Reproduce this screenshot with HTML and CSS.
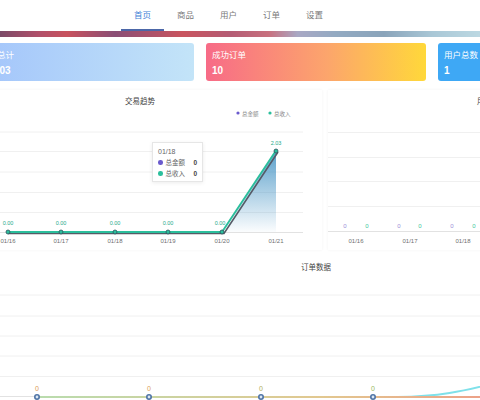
FILE: index.html
```html
<!DOCTYPE html>
<html lang="zh-CN">
<head>
    <meta charset="UTF-8">
    <meta name="viewport" content="width=device-width, initial-scale=1.0">
    <title>后台首页</title>
    <link rel="stylesheet" href="styles.css">
</head>
<body>

    <header class="topbar">
        <nav class="tabs">
            <a class="tab active" href="#">首页</a>
            <a class="tab" href="#">商品</a>
            <a class="tab" href="#">用户</a>
            <a class="tab" href="#">订单</a>
            <a class="tab" href="#">设置</a>
        </nav>
        <div class="ribbon"></div>
    </header>

    <main class="board">

        <!-- Summary cards -->
        <section class="stats">
            <div class="stat stat-blue">
                <div class="stat-label">交易总计</div>
                <div class="stat-value">102.03</div>
            </div>
            <div class="stat stat-warm">
                <div class="stat-label">成功订单</div>
                <div class="stat-value">10</div>
            </div>
            <div class="stat stat-sky">
                <div class="stat-label">用户总数</div>
                <div class="stat-value">1</div>
            </div>
        </section>

        <!-- Trend charts -->
        <section class="charts">
            <div class="panel">
                <svg class="chart" width="370" height="160" viewBox="0 0 370 160">
                    <defs>
                        <linearGradient id="trendFill" x1="0" y1="0" x2="0" y2="1">
                            <stop offset="0" stop-color="#3d8fc2" stop-opacity="0.85"/>
                            <stop offset="1" stop-color="#3d8fc2" stop-opacity="0.02"/>
                        </linearGradient>
                    </defs>
                    <text class="chart-title" x="188" y="14" text-anchor="middle">交易趋势</text>
                    <circle cx="286" cy="23" r="1.6" fill="#6a5acd"/>
                    <text class="legend" x="290" y="25.5">总金额</text>
                    <circle cx="318" cy="23" r="1.6" fill="#2bbf9c"/>
                    <text class="legend" x="322" y="25.5">总收入</text>

                    <g class="grid">
                        <line x1="0" y1="42" x2="351" y2="42"/>
                        <line x1="0" y1="61.5" x2="351" y2="61.5"/>
                        <line x1="0" y1="82" x2="351" y2="82"/>
                        <line x1="0" y1="102.5" x2="351" y2="102.5"/>
                        <line x1="0" y1="122.5" x2="351" y2="122.5"/>
                        <line class="axis" x1="0" y1="142.5" x2="351" y2="142.5"/>
                    </g>

                    <polygon points="270,142 324,61 324,142" fill="url(#trendFill)"/>
                    <polyline points="56,143.5 109,143.5 163,143.5 216,143.5 272,143.5 326,62" fill="none" stroke="#555b66" stroke-width="1.6"/>
                    <polyline points="56,142 109,142 163,142 216,142 270,142 324,60.5" fill="none" stroke="#2bbf9c" stroke-width="1.8"/>

                    <g fill="#2bbf9c" stroke="#2f4f5a" stroke-width="0.8">
                        <circle cx="56" cy="142" r="2"/>
                        <circle cx="109" cy="142" r="2"/>
                        <circle cx="163" cy="142" r="2"/>
                        <circle cx="216" cy="142" r="2"/>
                        <circle cx="270" cy="142" r="2"/>
                        <circle cx="324" cy="61" r="2"/>
                    </g>

                    <g class="point-label" text-anchor="middle">
                        <text x="56" y="135">0.00</text>
                        <text x="109" y="135">0.00</text>
                        <text x="163" y="135">0.00</text>
                        <text x="216" y="135">0.00</text>
                        <text x="268" y="135">0.00</text>
                        <text x="324" y="55">2.03</text>
                    </g>

                    <g class="tick" text-anchor="middle">
                        <text x="56" y="153">01/16</text>
                        <text x="109" y="153">01/17</text>
                        <text x="163" y="153">01/18</text>
                        <text x="216" y="153">01/19</text>
                        <text x="270" y="153">01/20</text>
                        <text x="324" y="153">01/21</text>
                    </g>
                </svg>

                <div class="tooltip">
                    <div class="tip-date">01/18</div>
                    <div class="tip-row"><i class="dot dot-purple"></i>总金额<b>0</b></div>
                    <div class="tip-row"><i class="dot dot-teal"></i>总收入<b>0</b></div>
                </div>
            </div>

            <div class="panel">
                <svg class="chart" width="370" height="160" viewBox="0 0 370 160">
                    <text class="chart-title" x="149" y="14">用户增长统计</text>
                    <g class="grid">
                        <line x1="0" y1="42.5" x2="370" y2="42.5"/>
                        <line x1="0" y1="67.5" x2="370" y2="67.5"/>
                        <line x1="0" y1="91.5" x2="370" y2="91.5"/>
                        <line x1="0" y1="116.5" x2="370" y2="116.5"/>
                        <line class="axis" x1="0" y1="141.5" x2="370" y2="141.5"/>
                    </g>
                    <g class="bar-label" text-anchor="middle">
                        <text x="17" y="138" fill="#9a8fd8">0</text>
                        <text x="39" y="138" fill="#3cc79a">0</text>
                        <text x="71" y="138" fill="#9a8fd8">0</text>
                        <text x="92" y="138" fill="#3cc79a">0</text>
                        <text x="124" y="138" fill="#9a8fd8">0</text>
                        <text x="146" y="138" fill="#3cc79a">0</text>
                    </g>
                    <g class="tick" text-anchor="middle">
                        <text x="28" y="153">01/16</text>
                        <text x="82" y="153">01/17</text>
                        <text x="135" y="153">01/18</text>
                    </g>
                </svg>
            </div>
        </section>

        <!-- Orders chart -->
        <section class="panel panel-wide">
            <svg class="chart" width="752" height="150" viewBox="0 0 752 150">
                <defs>
                    <linearGradient id="orderLine" x1="85" y1="0" x2="560" y2="0" gradientUnits="userSpaceOnUse">
                        <stop offset="0" stop-color="#b9dcae"/>
                        <stop offset="0.6" stop-color="#e2c890"/>
                        <stop offset="1" stop-color="#ee9a86"/>
                    </linearGradient>
                </defs>
                <text class="chart-title" x="364" y="15" text-anchor="middle">订单数据</text>
                <g class="grid">
                    <line x1="0" y1="40" x2="752" y2="40"/>
                    <line x1="0" y1="61" x2="752" y2="61"/>
                    <line x1="0" y1="81" x2="752" y2="81"/>
                    <line x1="0" y1="101" x2="752" y2="101"/>
                    <line x1="0" y1="121.5" x2="752" y2="121.5"/>
                    <line class="axis" x1="0" y1="141.5" x2="752" y2="141.5"/>
                </g>
                <path d="M445,142 C485,141.5 510,137 550,126" fill="none" stroke="#7fe1ea" stroke-width="2"/>
                <line x1="85" y1="142" x2="560" y2="142" stroke="url(#orderLine)" stroke-width="2"/>
                <g fill="#dbe6f2" stroke="#4f74a6" stroke-width="1.6">
                    <circle cx="85" cy="142" r="2.2"/>
                    <circle cx="197" cy="142" r="2.2"/>
                    <circle cx="309" cy="142" r="2.2"/>
                    <circle cx="421" cy="142" r="2.2"/>
                </g>
                <g class="order-label" text-anchor="middle">
                    <text x="85" y="136" fill="#dc9a55">0</text>
                    <text x="197" y="136" fill="#dc9e58">0</text>
                    <text x="309" y="136" fill="#b0ae5c">0</text>
                    <text x="421" y="136" fill="#98b85e">0</text>
                </g>
            </svg>
        </section>

    </main>

</body>
</html>
```

FILE: styles.css
```css
body {
    margin: 0;
    padding: 0;
    font-family: "Noto Sans CJK SC", "Liberation Sans", sans-serif;
    color: #333;
    background-color: #fff;
    overflow: hidden;
}

.topbar {
    background-color: #fff;
}

.tabs {
    display: flex;
    margin-left: 121px;
    height: 31px;
}

.tab {
    width: 43px;
    box-sizing: border-box;
    text-align: center;
    font-size: 8.5px;
    line-height: 29px;
    color: #7a7a7a;
    text-decoration: none;
    border-bottom: 2px solid transparent;
}

.tab.active {
    color: #3f7fd6;
    border-bottom-color: #4c67a8;
}

.ribbon {
    height: 6px;
    background: linear-gradient(90deg, #7b4a68 0%, #b0506a 8%, #c8525e 14%, #8a4e76 24%, #c9545f 38%, #b45c74 48%, #c8707e 56%, #a9a8c4 62%, #93aac2 70%, #8aa4ba 80%, #a9c7d6 90%, #bcd8e2 100%);
    filter: blur(0.6px);
}

.board {
    margin-left: -48px;
    width: 752px;
}

.stats {
    display: flex;
    gap: 12px;
    margin: 6px 0 0 22px;
}

.stat {
    width: 220px;
    height: 38px;
    box-sizing: border-box;
    padding: 5px 6px;
    border-radius: 3px;
    color: #fff;
}

.stat-blue {
    background: linear-gradient(90deg, #a2c4fb, #c3e4f8);
}

.stat-warm {
    background: linear-gradient(90deg, #f76b87, #fca56c 55%, #ffd83a);
}

.stat-sky {
    background-color: #3ea8f5;
}

.stat-label {
    font-size: 8.5px;
    line-height: 12px;
}

.stat-value {
    margin-top: 5px;
    font-family: "Liberation Sans", sans-serif;
    font-size: 10px;
    font-weight: bold;
    line-height: 12px;
}

.charts {
    display: flex;
    gap: 6px;
    margin-top: 9px;
}

.panel {
    position: relative;
    width: 370px;
    height: 160px;
    background-color: #fff;
    box-shadow: 0 0 3px rgba(0, 0, 0, 0.05);
}

.panel-wide {
    width: 752px;
    height: 150px;
    margin-top: 5px;
    box-shadow: none;
}

.chart {
    display: block;
}

.chart-title {
    font-size: 7.5px;
    fill: #444;
}

.legend {
    font-size: 5.5px;
    fill: #888;
}

.grid line {
    stroke: #f0f0f0;
    stroke-width: 1;
}

.grid .axis {
    stroke: #e2e2e2;
}

.tick {
    font-family: "Liberation Sans", sans-serif;
    font-size: 6px;
    fill: #6f6f6f;
}

.point-label {
    font-family: "Liberation Sans", sans-serif;
    font-size: 5.5px;
    fill: #27a98b;
}

.bar-label {
    font-family: "Liberation Sans", sans-serif;
    font-size: 6px;
}

.order-label {
    font-family: "Liberation Sans", sans-serif;
    font-size: 7px;
}

.tooltip {
    position: absolute;
    left: 200px;
    top: 52px;
    width: 51px;
    height: 40px;
    box-sizing: border-box;
    padding: 3px 5px;
    background-color: #fff;
    border: 1px solid #e6e6e6;
    box-shadow: 0 1px 4px rgba(0, 0, 0, 0.08);
    font-size: 6.5px;
    color: #666;
}

.tip-date {
    font-family: "Liberation Sans", sans-serif;
    font-size: 7px;
    line-height: 11px;
}

.tip-row {
    display: flex;
    align-items: center;
    line-height: 11px;
}

.tip-row b {
    margin-left: auto;
    font-family: "Liberation Sans", sans-serif;
    color: #444;
}

.dot {
    width: 4.5px;
    height: 4.5px;
    margin-right: 3px;
    border-radius: 50%;
}

.dot-purple {
    background-color: #6a5acd;
}

.dot-teal {
    background-color: #2bbf9c;
}
```
